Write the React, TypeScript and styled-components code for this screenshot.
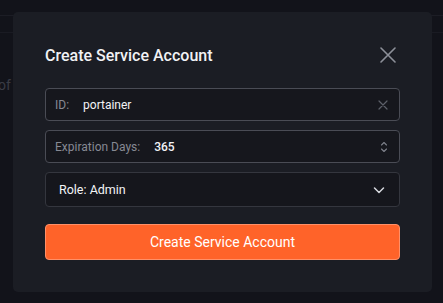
import styled, { createGlobalStyle } from 'styled-components';

const GlobalStyle = createGlobalStyle`
  html, body {
    margin: 0;
    padding: 0;
    background: #12131a;
  }
  * {
    box-sizing: border-box;
  }
  body {
    font-family: Roboto, 'Liberation Sans', sans-serif;
  }
`;

const App = () => {
  return (
    <>
      <GlobalStyle />
      <Page>
        <TopBar />
        <SubBar />
        <BackText>of t</BackText>
        <Overlay>
          <Modal>
            <Header>
              <Title>Create Service Account</Title>
              <CloseButton aria-label='close'>
                <svg width='16' height='16' viewBox='0 0 16 16'>
                  <path d='M1 1L15 15M15 1L1 15' stroke='#8d9099' strokeWidth='1.6' strokeLinecap='round' />
                </svg>
              </CloseButton>
            </Header>
            <Form>
              <Field>
                <Label>ID:</Label>
                <Value>portainer</Value>
                <Trailing>
                  <svg width='10' height='10' viewBox='0 0 10 10'>
                    <path d='M1 1L9 9M9 1L1 9' stroke='#5d6069' strokeWidth='1.2' strokeLinecap='round' />
                  </svg>
                </Trailing>
              </Field>
              <Field>
                <Label>Expiration Days:</Label>
                <Value $strong>365</Value>
                <Trailing>
                  <svg width='8' height='14' viewBox='0 0 8 14'>
                    <path d='M1.5 5L4 2.5L6.5 5M1.5 9L4 11.5L6.5 9' stroke='#7d808a' strokeWidth='1.1' fill='none' strokeLinecap='round' strokeLinejoin='round' />
                  </svg>
                </Trailing>
              </Field>
              <Select>
                <SelectText>Role: Admin</SelectText>
                <Trailing>
                  <svg width='14' height='14' viewBox='0 0 14 14'>
                    <path d='M2.5 5L7 9.5L11.5 5' stroke='#d6d8de' strokeWidth='1.5' fill='none' strokeLinecap='round' strokeLinejoin='round' />
                  </svg>
                </Trailing>
              </Select>
              <SubmitButton>Create Service Account</SubmitButton>
            </Form>
          </Modal>
        </Overlay>
      </Page>
    </>
  );
};

export default App;

const Page = styled.div`
  position: relative;
  width: 443px;
  height: 303px;
  overflow: hidden;
  background: #12131a;
`;

const TopBar = styled.div`
  height: 16px;
  border-bottom: 1px solid #1c1d25;
`;

const SubBar = styled.div`
  height: 17px;
  border-bottom: 1px solid #1a1b23;
`;

const BackText = styled.div`
  padding: 44px 0 0 0;
  margin-left: -2px;
  font-size: 14px;
  color: #3a3c45;
  white-space: nowrap;
`;

const Overlay = styled.div`
  position: absolute;
  inset: 0;
  padding: 12px 11px 12px 13px;
`;

const Modal = styled.div`
  width: 419px;
  height: 280px;
  background: #1b1d24;
  border-radius: 5px;
  padding: 29px 32px 0 32px;
`;

const Header = styled.div`
  display: flex;
  align-items: center;
  justify-content: space-between;
  height: 28px;
`;

const Title = styled.h2`
  margin: 0;
  font-size: 16px;
  font-weight: 500;
  color: #f1f2f5;
`;

const CloseButton = styled.button`
  display: flex;
  align-items: center;
  justify-content: center;
  width: 20px;
  height: 20px;
  margin-right: 2px;
  padding: 0;
  border: none;
  background: transparent;
`;

const Form = styled.div`
  display: flex;
  flex-direction: column;
  gap: 9px;
  margin-top: 19px;
`;

const Field = styled.div`
  display: flex;
  align-items: center;
  height: 33px;
  padding: 0 11px 0 9px;
  background: #16171d;
  border: 1px solid #4a4c55;
  border-radius: 4px;
  font-size: 12px;
`;

const Label = styled.span`
  color: #868993;
  margin-right: 14px;
`;

const Value = styled.span<{ $strong?: boolean }>`
  flex: 1;
  color: #f2f3f6;
  font-weight: ${({ $strong }) => ($strong ? 500 : 400)};
`;

const Trailing = styled.span`
  display: flex;
  align-items: center;
`;

const Select = styled.div`
  display: flex;
  align-items: center;
  height: 35px;
  padding: 0 13px 0 13px;
  background: #15161c;
  border: 1px solid #34363e;
  border-radius: 4px;
`;

const SelectText = styled.span`
  flex: 1;
  font-size: 12.5px;
  font-weight: 400;
  color: #f3f4f7;
`;

const SubmitButton = styled.button`
  margin-top: 8px;
  height: 36px;
  width: 100%;
  background: #ff6329;
  border: 1px solid #ff9068;
  border-radius: 4px;
  color: #ffffff;
  font-family: Roboto, 'Liberation Sans', sans-serif;
  font-size: 14px;
  font-weight: 400;
`;
